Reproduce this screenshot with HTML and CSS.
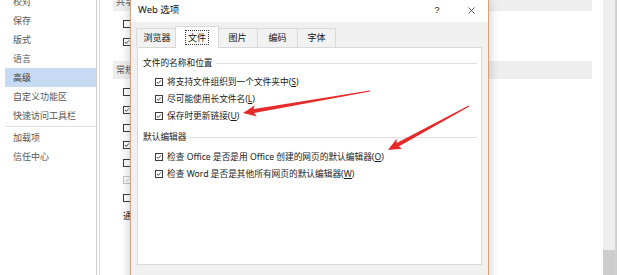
FILE: index.html
```html
<!DOCTYPE html>
<html lang="zh-CN">
<head>
<meta charset="utf-8">
<title>Word 选项 - 高级 - Web 选项</title>
<link rel="stylesheet" href="styles.css">
</head>
<body>
<div class="window">
  <nav class="sidebar">
    <ul class="nav">
      <li>校对</li>
      <li>保存</li>
      <li>版式</li>
      <li>语言</li>
      <li class="active">高级</li>
      <li>自定义功能区</li>
      <li>快速访问工具栏</li>
      <li class="sep"></li>
      <li>加载项</li>
      <li>信任中心</li>
    </ul>
  </nav>
  <main class="content">
    <div class="band first">共享</div>
    <div class="opts">
      <div class="row"><span class="cb"></span></div>
      <div class="row"><span class="cb"><svg viewBox="0 0 8 8"><polyline points="1.3,4 3.1,5.9 6.6,1.9"/></svg></span></div>
    </div>
    <div class="band">常规</div>
    <div class="opts">
      <div class="row"><span class="cb"></span></div>
      <div class="row"><span class="cb"><svg viewBox="0 0 8 8"><polyline points="1.3,4 3.1,5.9 6.6,1.9"/></svg></span></div>
      <div class="row"><span class="cb"></span></div>
      <div class="row"><span class="cb"><svg viewBox="0 0 8 8"><polyline points="1.3,4 3.1,5.9 6.6,1.9"/></svg></span></div>
      <div class="row"><span class="cb"></span></div>
      <div class="row disabled"><span class="cb"><svg viewBox="0 0 8 8"><polyline points="1.3,4 3.1,5.9 6.6,1.9"/></svg></span></div>
      <div class="row"><span class="cb"></span></div>
      <div class="row label">通</div>
    </div>
  </main>
  <div class="scroll">
    <div class="track"><div class="thumb"></div></div>
  </div>
</div>

<section class="dialog">
  <header class="titlebar">
    <span class="title">Web 选项</span>
    <span class="help">?</span>
    <span class="close"><svg viewBox="0 0 8 8"><path d="M0.5 0.5 L7.5 7.5 M7.5 0.5 L0.5 7.5"/></svg></span>
  </header>
  <div class="tabs">
    <div class="tab">浏览器</div>
    <div class="tab selected"><span class="focus">文件</span></div>
    <div class="tab">图片</div>
    <div class="tab">编码</div>
    <div class="tab last">字体</div>
  </div>
  <div class="panel">
    <div class="group">
      <div class="ghead"><span>文件的名称和位置</span><i class="line"></i></div>
      <div class="prow"><span class="cb"><svg viewBox="0 0 8 8"><polyline points="1.3,4 3.1,5.9 6.6,1.9"/></svg></span><span>将支持文件组织到一个文件夹中(<u>S</u>)</span></div>
      <div class="prow"><span class="cb"><svg viewBox="0 0 8 8"><polyline points="1.3,4 3.1,5.9 6.6,1.9"/></svg></span><span>尽可能使用长文件名(<u>L</u>)</span></div>
      <div class="prow"><span class="cb"><svg viewBox="0 0 8 8"><polyline points="1.3,4 3.1,5.9 6.6,1.9"/></svg></span><span>保存时更新链接(<u>U</u>)</span></div>
    </div>
    <div class="group second">
      <div class="ghead"><span>默认编辑器</span><i class="line"></i></div>
      <div class="prow"><span class="cb"><svg viewBox="0 0 8 8"><polyline points="1.3,4 3.1,5.9 6.6,1.9"/></svg></span><span>检查 Office 是否是用 Office 创建的网页的默认编辑器(<u>O</u>)</span></div>
      <div class="prow"><span class="cb"><svg viewBox="0 0 8 8"><polyline points="1.3,4 3.1,5.9 6.6,1.9"/></svg></span><span>检查 Word 是否是其他所有网页的默认编辑器(<u>W</u>)</span></div>
    </div>
  </div>
</section>

<svg class="arrows" viewBox="0 0 620 275" width="620" height="275">
  <polygon points="243,113 254.9,105.2 253.4,109.2 369.9,90.4 370.2,91.6 254.1,113.0 256.8,116.5"/>
  <polygon points="388,150 402.2,148.8 398.7,146.5 469.3,106.6 468.7,105.4 396.7,143.1 396.6,138.7"/>
</svg>
</body>
</html>
```
FILE: styles.css
```css
* { box-sizing: border-box; margin: 0; padding: 0; }
html, body { width: 620px; height: 275px; overflow: hidden; background: #fff; }
body {
  font-family: "Noto Sans", "Noto Sans CJK SC", "Liberation Sans", sans-serif;
  position: relative;
  color: #222;
}

.window { display: flex; height: 275px; }

/* left navigation */
.sidebar { width: 97px; flex: none; border-right: 1px solid #cfcfcf; margin-right: 2px; }
.nav { list-style: none; margin-top: -8px; padding-left: 5px; }
.nav li { height: 19px; line-height: 19px; font-size: 9px; color: #555; padding-left: 8px; white-space: nowrap; }
.nav li.active { background: #c7daf3; color: #3a3a3a; }
.nav li.sep { height: 1px; background: #e2e2e2; margin: 1px 0; }

/* main options area behind dialog */
.content { flex: 1; border-left: 1px solid #d8d8d8; padding: 0 11px 0 13px; }
.band { height: 18px; line-height: 18px; background: #eeeeee; font-size: 9px; color: #555; padding-left: 3px; white-space: nowrap; overflow: hidden; }
.band.first { margin-top: -7px; }
.opts { padding-top: 4.7px; }
.opts + .band { margin-top: 10px; }
.row { display: flex; align-items: center; gap: 4px; height: 17.6px; line-height: 12px; padding-left: 10px; font-size: 9px; color: #333; white-space: nowrap; }
.row.label { color: #222; }
.row.disabled .cb { border-color: #c4c4c4; }
.row.disabled .cb svg polyline { stroke: #b8b8b8; }

/* checkbox */
.cb { width: 8px; height: 8px; border: 1px solid #3a3a3a; background: #fff; flex: none; display: flex; }
.cb svg { width: 6px; height: 6px; }
.cb svg polyline { fill: none; stroke: #222; stroke-width: 1.1; }

/* scrollbar */
.scroll { width: 17px; flex: none; padding-right: 3px; display: flex; }
.track { width: 14px; background: #eeeeee; border-right: 2px solid #d2d2d2; display: flex; flex-direction: column; justify-content: flex-end; }
.thumb { height: 25px; background: #cdcdcd; }

/* Web options dialog */
.dialog {
  position: absolute; left: 130px; top: 0;
  width: 359px; height: 292px;
  background: #f0f0f0;
  border-left: 1px solid #cfa383; border-right: 1px solid #cfa383;
  box-shadow: 0 0 10px rgba(0, 0, 0, 0.22);
}
.titlebar { height: 22px; background: #fff; display: flex; align-items: center; padding: 0 7px 2px 7px; line-height: 12px; }
.title { flex: 1; font-size: 9.5px; color: #111; }
.help { width: 12px; text-align: center; font-family: "Liberation Sans", sans-serif; font-size: 9.5px; color: #222; margin-right: 18px; }
.close { width: 20px; display: flex; justify-content: center; }
.close svg { width: 7px; height: 7px; }
.close svg path { stroke: #333; stroke-width: 0.9; fill: none; }

.tabs { display: flex; align-items: flex-end; height: 25px; padding-left: 5px; }
.tab { height: 19px; line-height: 18px; text-align: center; font-size: 9px; color: #111; border: 1px solid #d9d9d9; border-bottom: none; background: #f2f2f2; width: 41px; margin-right: -1px; }
.tab:first-child { width: 42px; }
.tab.last { width: 39px; }
.tab.selected { width: 44px; height: 22px; line-height: 21px; margin: 0 -2px -1px -2px; background: #fff; position: relative; z-index: 1; }
.focus { outline: 1px dotted #333; outline-offset: 0; padding: 0 2px; }

.panel { margin-left: 6px; width: 345px; height: 218px; background: #fff; border: 1px solid #d9d9d9; padding: 7px 4px 0 5px; font-size: 8.7px; color: #1a1a1a; }
.ghead { display: flex; align-items: center; gap: 3px; height: 16px; line-height: 12px; white-space: nowrap; color: #222; }
.ghead .line { flex: 1; height: 1px; background: #dedede; }
.group .ghead + .prow { margin-top: 2px; }
.group.second { margin-top: 5px; }
.group.second .ghead + .prow { margin-top: 3px; }
.prow { display: flex; align-items: center; gap: 4px; height: 17px; line-height: 12px; padding-left: 12px; white-space: nowrap; }
.prow u { text-decoration-thickness: 1px; text-underline-offset: 1px; }

/* annotation arrows */
.arrows { position: absolute; left: 0; top: 0; pointer-events: none; }
.arrows polygon { fill: #e62a2a; }
```
